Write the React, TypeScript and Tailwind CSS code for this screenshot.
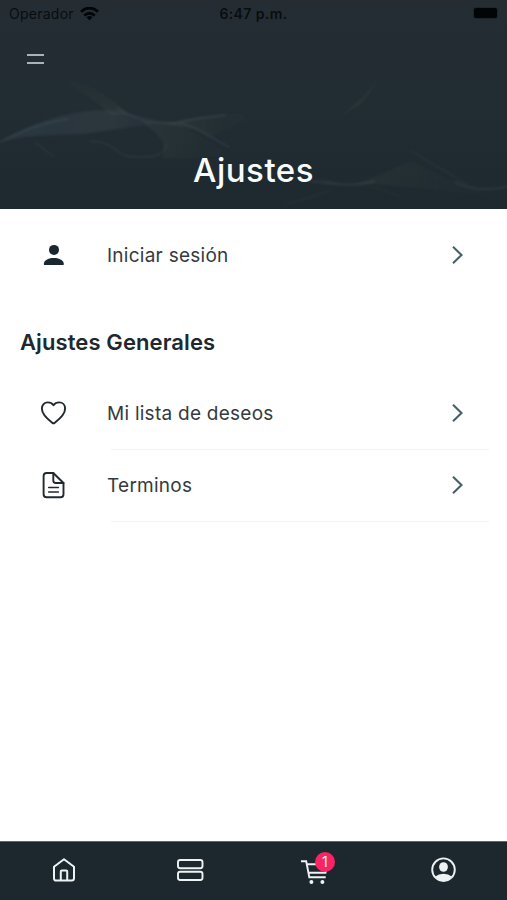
import type { ReactNode } from 'react';

function Chevron() {
  return (
    <svg width="14" height="20" viewBox="0 0 14 20" fill="none" stroke="#456168" strokeWidth="2.1">
      <path d="M2 1.800 10.500 10 2 18.200" />
    </svg>
  );
}

function UserIcon() {
  return (
    <svg width="28" height="28" viewBox="0 0 28 28" fill="#1a272e">
      <circle cx="14" cy="8.900" r="5" />
      <path d="M3.900 24v-1.400c0-3.600 5.300-5.600 9.900-5.600s9.900 2 9.900 5.600V24z" />
    </svg>
  );
}

function HeartIcon() {
  return (
    <svg width="28" height="28" viewBox="0 0 28 28" fill="none" stroke="#20292e" strokeWidth="1.900" strokeLinejoin="round">
      <path d="M13.500 6.200C12 4.100 10.100 3.400 7.800 3.400 4.300 3.400 1.900 6.100 1.900 9.700c0 5.700 5.400 10.200 10.300 14 .8.700 1.800.7 2.600 0 4.900-3.800 10.300-8.300 10.300-14 0-3.600-2.400-6.300-5.900-6.300-2.300 0-4.200.7-5.700 2.800z" />
    </svg>
  );
}

function DocumentIcon() {
  return (
    <svg width="28" height="28" viewBox="0 0 28 28" fill="none" stroke="#20292e" strokeWidth="1.900" strokeLinecap="round" strokeLinejoin="round">
      <path d="M13.300 2H6.600Q3.600 2 3.600 5v18.200q0 3 3 3h13.900q3 0 3-3V12z" />
      <path d="M13.300 2v7.500q0 2.500 2.500 2.500h7.700" />
      <path d="M8.700 16.500h9.700M8.700 21h9.700" strokeWidth="1.500" />
    </svg>
  );
}

function Row({ icon, label, divider }: { icon: ReactNode; label: string; divider?: boolean }) {
  return (
    <div className="flex h-[72px] pr-[18px]">
      <div className="flex w-[107px] items-center justify-center">{icon}</div>
      <div className="relative flex grow items-center justify-between pr-[24px]">
        <span className="pt-[2px] text-[19px] leading-6 tracking-[0.26px] text-[#343a3e]">{label}</span>
        <Chevron />
        {divider && <div className="absolute right-0 bottom-[-1px] left-[4px] h-px bg-[#f2f3f3]" />}
      </div>
    </div>
  );
}

function Waves() {
  return (
    <svg className="absolute inset-0" width="507" height="209" viewBox="0 0 507 209" fill="none">
      <defs>
        <linearGradient id="crest" x1="0" x2="1">
          <stop offset="0" stopColor="#6b8590" stopOpacity=".13" />
          <stop offset=".65" stopColor="#6b8590" stopOpacity=".12" />
          <stop offset="1" stopColor="#6b8590" stopOpacity="0" />
        </linearGradient>
        <linearGradient id="veil" x1="0" x2="1">
          <stop offset="0" stopColor="#60785c" stopOpacity=".13" />
          <stop offset="1" stopColor="#60785c" stopOpacity="0" />
        </linearGradient>
        <linearGradient id="slope" x1="0" x2="0" y1="0" y2="1">
          <stop offset="0" stopColor="#60785c" stopOpacity=".02" />
          <stop offset="1" stopColor="#60785c" stopOpacity=".12" />
        </linearGradient>
        <filter id="soft" x="-10%" y="-10%" width="120%" height="120%">
          <feGaussianBlur stdDeviation=".8" />
        </filter>
      </defs>
      <g filter="url(#soft)">
        <path d="M0 142C32 123 63 112 100 110c25-1 40 9 77 12-50 5-60 7-92 12-35 1-60 1-85 8z" fill="url(#crest)" />
        <path d="M62 79c30 4 49 19 67 35l-18 1c-14-13-29-23-49-36z" fill="url(#slope)" />
        <path d="M140 121l35 2c24 10 43 23 60 36-26-5-50 2-73-1 8-15-7-27-22-37z" fill="url(#veil)" />
        <path d="M162 124c29-7 55-11 95-11-22 14-37 18-46 24-14-7-26-11-49-13z" fill="url(#veil)" />
        <path d="M90 141c32 2 20 16 49 16 17 0 27-2 27-14" stroke="#60785c" strokeOpacity=".13" strokeWidth="2" />
        <path d="M35 142 54 157" stroke="#60785c" strokeOpacity=".12" strokeWidth="2" />
        <path d="M0 142c23-12 44-20 68-23M117 108c18 12 40 16 60 15 22 3 31 14 52 24M177 123c17-4 29-6 49-8" stroke="#76919c" strokeOpacity=".16" strokeWidth="1.500" />
        <path d="M317 179c18 2 27 7 37 5 24-7 35-15 58-23 26 12 48 27 64 28h31v5h-35c-39-4-79-10-118-10-19 0-29-1-37-5z" fill="url(#veil)" />
        <path d="M280 205c32-4 51-15 74-21l20 2c17 4 31 13 45 18-24-9-42-17-64-18-31 3-45 12-75 19z" fill="url(#slope)" />
        <path d="m411 151 57 34" stroke="#60785c" strokeOpacity=".13" strokeWidth="1.500" />
        <path d="M309 181q45 7 66 0M455 182c19 10 35 7 52 5" stroke="#76919c" strokeOpacity=".12" strokeWidth="2" />
        <path d="M388 58c-9 20-17 37-29 48-8 3-12 7-16 9 18-19 30-22 45-57z" fill="url(#slope)" />
      </g>
    </svg>
  );
}

function Header() {
  return (
    <header className="relative h-[209px] shrink-0 bg-gradient-to-b from-[#252d33] via-[#222c33] to-[#1e282f]">
      <Waves />
      <div className="relative grid h-7 grid-cols-3 items-center text-[#080d10]">
        <div className="flex items-center gap-[6px] pl-[9px]">
          <span className="text-[14px] leading-none tracking-[0.25px]">Operador</span>
          <svg width="19" height="15" viewBox="0 0 19 15" fill="none" stroke="#030607" strokeWidth="2.700">
            <path d="M1 4.700Q9.500-2.700 18 4.700M4.200 8.500Q9.500 4 14.800 8.500" />
            <path d="m9.500 13.500-3-3.200q3-2.500 6 0z" fill="#030607" stroke="none" />
          </svg>
        </div>
        <span className="text-center text-[14px] leading-none font-semibold tracking-[0.4px]">6:47 p.m.</span>
        <div className="flex justify-end pr-[10px] pb-[2px]">
          <div className="h-[10px] w-[23px] rounded-[2px] bg-[#020506] ring-1 ring-[#1d262b]" />
        </div>
      </div>
      <button aria-label="Menu" className="relative mt-[26px] ml-[27px] flex w-[17px] flex-col gap-[6px]">
        <span className="h-[2px] w-full bg-[#a9b2b7]" />
        <span className="h-[2px] w-full bg-[#a9b2b7]" />
      </button>
      <h1 className="relative mt-[86px] text-center text-[33px] leading-10 font-medium tracking-[0.5px] text-[#f7fbfc]">Ajustes</h1>
    </header>
  );
}

function TabBar() {
  return (
    <nav className="grid h-[59px] shrink-0 grid-cols-4 border-t border-[#5d676b] bg-[#1c282e] text-[#edf3f5]">
      <div className="flex justify-center pt-[14px] pl-[2px]">
        <svg width="26" height="28" viewBox="0 0 26 28" fill="none" stroke="currentColor" strokeWidth="2" strokeLinejoin="round">
          <path d="M3 10.800 13 3.300l10 7.500v11.500q0 2.300-2.300 2.300H5.300Q3 24.600 3 22.300z" />
          <path d="M9.800 24.500v-9q0-1 1-1h4.400q1 0 1 1v9" />
        </svg>
      </div>
      <div className="flex justify-center pt-[15px]">
        <svg width="28" height="28" viewBox="0 0 28 28" fill="none" stroke="currentColor" strokeWidth="1.900">
          <rect x="2" y="3" width="24.500" height="8.300" rx="2.200" />
          <rect x="2" y="14.700" width="24.500" height="8.300" rx="2.200" />
        </svg>
      </div>
      <div className="flex justify-center pt-[14px] pr-[4px]">
        <div className="relative h-7 w-7">
          <svg width="28" height="28" viewBox="0 0 28 28" fill="none" stroke="currentColor" strokeWidth="1.900">
            <path d="M0 5.300h5.200l3.100 16h16.400M6 8.300h20l-1.500 8.400H7.500" />
            <circle cx="10.400" cy="26" r="2" fill="currentColor" stroke="none" />
            <circle cx="21.400" cy="26" r="2" fill="currentColor" stroke="none" />
          </svg>
          <span className="absolute top-[-4px] left-[14px] flex h-[20px] w-[20px] items-center justify-center rounded-full bg-[#fa2463] text-[14px] leading-none">1</span>
        </div>
      </div>
      <div className="flex justify-center pt-[14px]">
        <svg width="28" height="28" viewBox="0 0 28 28">
          <circle cx="13.500" cy="13.700" r="11.300" fill="none" stroke="currentColor" strokeWidth="1.900" />
          <ellipse cx="13.500" cy="11" rx="4.400" ry="4.800" fill="currentColor" />
          <path d="M5.300 20.500Q8.500 17.700 13.500 17.700t8.200 2.800Q18.500 25 13.500 25t-8.200-4.500" fill="currentColor" />
        </svg>
      </div>
    </nav>
  );
}

export default function App() {
  return (
    <div className="flex h-[900px] w-[507px] flex-col overflow-hidden bg-white font-['Inter',sans-serif]">
      <Header />
      <main className="grow pt-[10px]">
        <Row icon={<UserIcon />} label="Iniciar sesión" />
        <h2 className="mt-[36px] mb-[20px] pl-5 text-[22px] leading-[30px] font-semibold tracking-[0.100px] text-[#20282d]">Ajustes Generales</h2>
        <Row icon={<HeartIcon />} label="Mi lista de deseos" divider />
        <Row icon={<DocumentIcon />} label="Terminos" divider />
      </main>
      <TabBar />
    </div>
  );
}
